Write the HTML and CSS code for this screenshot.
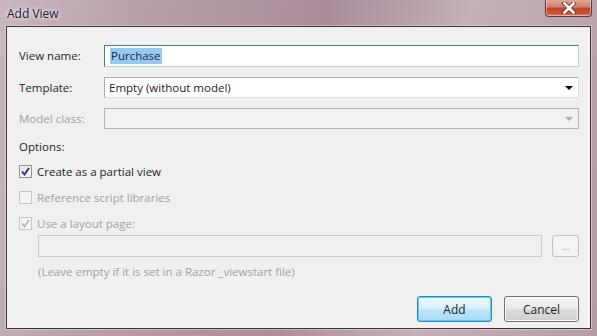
FILE: index.html
```html
<!DOCTYPE html>
<html lang="en">
<head>
    <meta charset="UTF-8">
    <title>Add View</title>
    <link rel="stylesheet" href="styles.css">
</head>
<body>
    <div class="window">
        <div class="titlebar">
            <span class="title">Add View</span>
            <button class="close-btn">
                <svg width="16" height="12" viewBox="0 0 16 12">
                    <path d="M3.5 1.5 L12.5 10.5 M12.5 1.5 L3.5 10.5" stroke="#6a3a38" stroke-width="4.4" stroke-linecap="square"/>
                    <path d="M3.5 1.5 L12.5 10.5 M12.5 1.5 L3.5 10.5" stroke="#fff" stroke-width="2.6" stroke-linecap="square"/>
                </svg>
            </button>
        </div>

        <div class="client">
            <div class="form-grid">
                <label class="label">View name:</label>
                <div class="textbox focused"><span class="selected">Purchase</span></div>

                <label class="label">Template:</label>
                <div class="combo">
                    <span>Empty (without model)</span>
                    <span class="arrow"></span>
                </div>

                <label class="label disabled">Model class:</label>
                <div class="combo is-disabled">
                    <span></span>
                    <span class="arrow"></span>
                </div>
            </div>

            <div class="options-title">Options:</div>

            <div class="check-row">
                <span class="checkbox checked">
                    <svg width="9" height="9" viewBox="0 0 9 9"><path d="M1 4.5 L3.5 7.5 L8 1" fill="none" stroke="#2a2f7a" stroke-width="1.8"/></svg>
                </span>
                <span>Create as a partial view</span>
            </div>
            <div class="check-row disabled">
                <span class="checkbox"></span>
                <span>Reference script libraries</span>
            </div>
            <div class="check-row disabled">
                <span class="checkbox checked">
                    <svg width="9" height="9" viewBox="0 0 9 9"><path d="M1 4.5 L3.5 7.5 L8 1" fill="none" stroke="#b4b4b4" stroke-width="1.8"/></svg>
                </span>
                <span>Use a layout page:</span>
            </div>

            <div class="layout-row">
                <div class="textbox is-disabled"></div>
                <button class="browse-btn">...</button>
            </div>
            <div class="hint">(Leave empty if it is set in a Razor _viewstart file)</div>

            <div class="buttons">
                <button class="btn default">Add</button>
                <button class="btn">Cancel</button>
            </div>
        </div>
    </div>
</body>
</html>
```

FILE: styles.css
```css
* {
    margin: 0;
    padding: 0;
    box-sizing: border-box;
}

body {
    font-family: 'Open Sans', 'Noto Sans', sans-serif;
    font-size: 11.5px;
    color: #1e1e1e;
    background: #b39aa5;
}

.window {
    width: 597px;
    height: 336px;
    overflow: hidden;
    background: linear-gradient(100deg, #c9b6be 0%, #b9a1ab 20%, #a98c9a 50%, #c4b0b8 72%, #b59ca7 100%);
}

.titlebar {
    height: 26px;
    display: flex;
    align-items: flex-start;
    justify-content: space-between;
    padding-left: 7px;
}

.title {
    margin-top: 5px;
    font-size: 12px;
    color: #141428;
    text-shadow: 0 0 6px rgba(255,255,255,0.9), 0 0 3px rgba(255,255,255,0.9);
}

.close-btn {
    width: 47px;
    height: 18px;
    margin-top: -1px;
    margin-right: 5px;
    border: 1px solid #5b3b3e;
    border-top: none;
    border-radius: 0 0 4px 4px;
    background: linear-gradient(#e3a99c 0%, #d3826f 45%, #c0432a 55%, #c85434 85%, #de8a6e 100%);
    box-shadow: inset 0 0 0 1px rgba(255,220,210,0.5);
    display: flex;
    align-items: center;
    justify-content: center;
}

.client {
    margin-left: 6px;
    width: 585px;
    height: 303px;
    background: #f0f0f0;
    border: 1px solid #3f3439;
    box-shadow: 0 0 0 1px rgba(255,255,255,0.35);
    padding: 18px 11px 0 12px;
}

.form-grid {
    display: grid;
    grid-template-columns: 85px 1fr;
    grid-template-rows: 22px 21px 21px;
    row-gap: 10px;
    align-items: center;
}

.label {
    line-height: 16px;
}

.label.disabled,
.check-row.disabled,
.hint {
    color: #a0a0a0;
}

.textbox {
    height: 22px;
    border: 1px solid #abadb3;
    border-top-color: #e2e3ea;
    background: #fff;
    display: flex;
    align-items: center;
    padding-left: 5px;
}

.textbox.focused {
    border-color: #3d7bad;
    border-right-color: #b5cfe7;
    border-bottom-color: #b5cfe7;
}

.selected {
    background: #99c9ef;
    color: #1a2a3a;
    line-height: 16px;
    padding: 0 1px;
}

.combo {
    height: 21px;
    border: 1px solid #acacac;
    border-bottom-color: #dadde5;
    border-right-color: #dadde5;
    background: #fff;
    display: flex;
    align-items: center;
    justify-content: space-between;
    padding: 0 5px 0 4px;
}

.arrow {
    width: 0;
    height: 0;
    border-left: 4px solid transparent;
    border-right: 4px solid transparent;
    border-top: 4px solid #000;
    margin-top: 1px;
}

.combo.is-disabled {
    background: #f2f2f2;
    border-color: #b4b4b4;
}

.combo.is-disabled .arrow {
    border-top-color: #b0b0b0;
}

.options-title {
    margin-top: 10px;
    line-height: 16px;
}

.check-row {
    display: flex;
    align-items: center;
    gap: 5px;
    height: 18px;
    margin-top: 7px;
}

.check-row + .check-row {
    margin-top: 8px;
}

.checkbox {
    width: 13px;
    height: 13px;
    border: 1px solid #8e8f8f;
    background: linear-gradient(135deg, #dcdcdc, #fbfbfb);
    display: flex;
    align-items: center;
    justify-content: center;
    box-shadow: inset 0 0 0 1px #f4f4f4;
}

.check-row.disabled .checkbox {
    border-color: #c6c6c6;
    background: #f4f4f4;
}

.layout-row {
    display: flex;
    gap: 10px;
    margin-top: 3px;
    margin-left: 19px;
}

.layout-row .textbox {
    flex: 1;
}

.textbox.is-disabled {
    background: #f0f0f0;
    border-color: #c9c9c9;
}

.browse-btn {
    width: 27px;
    height: 22px;
    border: 1px solid #c2c2c2;
    border-radius: 3px;
    background: #f4f4f4;
    color: #a8a8a8;
    font-family: inherit;
    font-size: 10px;
    line-height: 1;
}

.hint {
    margin-top: 7px;
    margin-left: 19px;
    line-height: 16px;
}

.buttons {
    display: flex;
    justify-content: flex-end;
    gap: 12px;
    margin-top: 16px;
}

.btn {
    width: 75px;
    height: 26px;
    border: 1px solid #707070;
    border-radius: 3px;
    background: linear-gradient(#f2f2f2 0%, #ebebeb 50%, #dddddd 51%, #cfcfcf 100%);
    box-shadow: inset 0 0 0 1px #fcfcfc;
    font-family: inherit;
    font-size: 12px;
    color: #1e1e1e;
}

.btn.default {
    border-color: #3c7fb1;
    box-shadow: inset 0 0 0 1px #48d8fb;
    background: linear-gradient(#eaf6fd 0%, #d9f0fc 50%, #bee6fd 51%, #a7d9f5 100%);
}
```
